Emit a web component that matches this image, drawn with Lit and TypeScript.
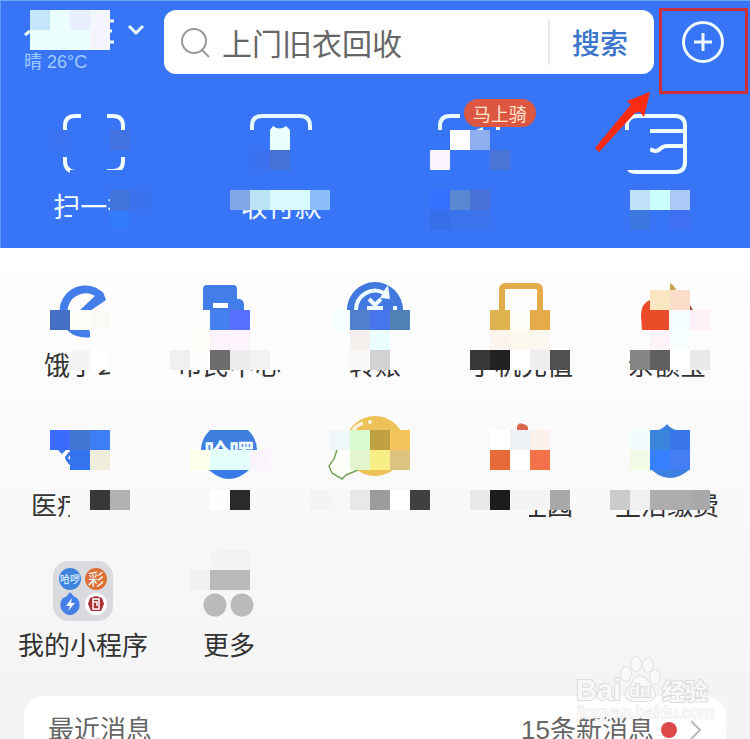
import { LitElement, css, html, svg, nothing } from "lit";
import { customElement, property } from "lit/decorators.js";

/** A horizontal run of 20px squares; an empty string leaves a gap. */
type Run = { x: number; y: number; colors: string[] };
/** A plain patch: x, y, width, height, colour. */
type Patch = [number, number, number, number, string];
type Tile = {
  name: string;
  icon: unknown;
  badge?: string;
  patches?: Patch[];
  runs?: Run[];
};

const BLUE = "#3875f6";
const R1 = "#fcfcfc";
const R2 = "#f9f9f9";

const quick: Tile[] = [
  {
    name: "扫一扫",
    icon: svg`<g fill="none" stroke="#f0fdff" stroke-width="4">
      <path d="M-29 16V12Q-29 2-19 2H-13M13 2H19Q29 2 29 12V16M-29 43V47Q-29 57-19 58M13 57H19Q29 57 29 47V43"/></g>`,
    patches: [
      [-24, 56, 60, 6, BLUE],
      [-24, 96, 40, 4, BLUE],
      [-22, 100, 40, 14, BLUE],
      [16, 76, 30, 40, BLUE],
    ],
    runs: [
      { x: -44, y: 16, colors: ["#3b72ef", "", "", "#4172df"] },
      { x: 16, y: 76, colors: ["#4272dc", "#3c71ee"] },
      { x: 16, y: 96, colors: ["#337af9"] },
    ],
  },
  {
    name: "收付款",
    icon: svg`<path d="M-29 16V12Q-29 2-19 2H19Q29 2 29 12V16" fill="none" stroke="#e8f8ff" stroke-width="4"/>
      <path d="M-11 16L-8 12Q-1 17 5 12L9 16Z" fill="#ecffff"/>`,
    runs: [
      { x: -12, y: 16, colors: ["#ecffff"] },
      { x: -32, y: 36, colors: ["#3b71ee", "#4472d6"] },
      { x: -52, y: 76, colors: ["#83a7e9", "#bbe3f6", "#d8faff", "#d8faff", "#8bbcfb"] },
    ],
  },
  {
    name: "",
    badge: "马上骑",
    icon: svg`<path d="M-29 16V12Q-29 2-19 2H-9" fill="none" stroke="#e8f8ff" stroke-width="4"/>
      <path d="M7 16L14 13V16ZM27 12h4v4h-4Z" fill="#ecffff"/>`,
    runs: [
      { x: -19, y: 16, colors: ["#ffffff", "#8eafef"] },
      { x: -39, y: 36, colors: ["#fbf4ff", "", "", "#4b75d2"] },
      { x: -39, y: 76, colors: ["#3670ff", "#5a88d2", "#4a72d8"] },
      { x: -39, y: 96, colors: ["#386fe8", "#3a73ec", "#3a73ec"] },
    ],
  },
  {
    name: "",
    icon: svg`<g fill="none" stroke="#f0fdff" stroke-width="4">
      <path d="M-29 16V12Q-29 2-19 2H19Q29 2 29 12V48Q29 58 19 58H-19Q-26 58-27 55M-6 17H29M29 32H11Q7 32 4 35Q0 39-6 35"/></g>`,
    patches: [[-33, 16, 26, 40, BLUE]],
    runs: [
      { x: -27, y: 76, colors: ["#bfdffb", "#c9ffff", "#abc8fb"] },
      { x: -27, y: 96, colors: ["#3d78e0", "", "#4070f2"] },
    ],
  },
];

const services: Tile[] = [
  {
    name: "饿了么",
    icon: svg`<path d="M17 14A22 22 0 1 0 7 52" fill="none" stroke="#437de9" stroke-width="8"/>
      <path d="M13 14L20 11L23 19L4 32L-5 31Z" fill="#437de9"/>`,
    patches: [
      [7, 49, 20, 12, R1],
      [27, 66, 16, 34, R1],
    ],
    runs: [
      { x: -33, y: 29, colors: ["#4470c4", "#fdfef8", "#fbfbf6"] },
      { x: -13, y: 69, colors: ["#f4f4f4", "#ffffff"] },
    ],
  },
  {
    name: "市民中心",
    icon: svg`<path d="M-26 29V8Q-26 4-22 4H4Q8 4 8 8V18H11Q15 19 15 24V29Z" fill="#437de9"/>
      <path d="M-16 22H-1V27H-16Z" fill="#fff"/>`,
    runs: [
      { x: -19, y: 29, colors: ["#4480f0", "#566ffc"] },
      { x: -39, y: 49, colors: ["#fffffa", "#fdf3fb", "#fdf3fb"] },
      { x: -59, y: 69, colors: ["#f0f0f0", "#fefefe", "#6d6d6d", "#ebebeb", "#f2f2f2", R1] },
    ],
  },
  {
    name: "转账",
    icon: svg`<path d="M-28 29A28 28 0 0 1 28 29Z" fill="#4179df"/>
      <path d="M-19 29A19 19 0 0 1 9 12" fill="none" stroke="#edfaff" stroke-width="4"/>
      <path d="M10 8L13 4L15 18L5 17ZM18 25h4v4h-4Z" fill="#edfaff"/>
      <path d="M-6 18L0 24L6 18M0 22V29M-8 27H8" fill="none" stroke="#edfaff" stroke-width="4"/>`,
    runs: [
      { x: -45, y: 29, colors: ["#f6ffff", "#527ece", "#4775ec", "#5080b4"] },
      { x: -25, y: 49, colors: ["#f5f0ee", "#ebffff"] },
      { x: -45, y: 69, colors: [R1, "#f9f9f9", "#d2d2d2", R1] },
    ],
  },
  {
    name: "手机充值",
    icon: svg`<path d="M-19 30V9Q-19 5-15 5H15Q19 5 19 9V30" fill="none" stroke="#e4ab49" stroke-width="6"/>`,
    runs: [
      { x: -31, y: 29, colors: ["#deb350", "#fffefb", "#e6ab48"] },
      { x: -31, y: 49, colors: ["#fdf4ee", "#fdf9ef", "#fdf8ef"] },
      { x: -51, y: 69, colors: ["#373737", "#222222", "#ffffff", "#eeeeee", "#505050", R1] },
    ],
  },
  {
    name: "余额宝",
    icon: svg`<path d="M-17 19Q-26 22-26 35L-25 49H2V29H-10Z" fill="#ea4b28"/>
      <path d="M3 2Q8 5 9 9H3Z" fill="#c9a650"/><path d="M23 24L26 29H23Z" fill="#a8473f"/>`,
    runs: [
      { x: -17, y: 9, colors: ["#fbe6c2", "#fcddca"] },
      { x: 3, y: 29, colors: ["#f5fdff", "#fef0f7"] },
      { x: -17, y: 49, colors: ["#fdf3f8", "#f7feff"] },
      { x: -37, y: 69, colors: ["#858585", "#606060", "#ffffff", "#e9e9e9"] },
    ],
  },
  {
    name: "医疗健康",
    icon: svg`<path d="M-25 29H-17L-21 33ZM-14 31Q-10 28-8 30L-10 36L-13 34L-15 37L-12 40V45Q-18 40-18 36Z" fill="#3474ee"/>`,
    patches: [[-13, 66, 68, 36, R2]],
    runs: [
      { x: -33, y: 9, colors: ["#3a6aff", "#4377d1", "#3f7df5"] },
      { x: -13, y: 29, colors: ["#3474ee", "#efeedd"] },
      { x: 7, y: 69, colors: ["#383838", "#b1b1b1"] },
    ],
  },
  {
    name: "",
    icon: svg`<path d="M-19 9H19Q28 18 28 29H-28Q-28 18-19 9Z" fill="#3f80de"/>
      <path d="M-20 49H20Q0 67-20 49Z" fill="#387be8"/>
      <text class="mini" x="0" y="41" font-size="25" font-weight="700">哈啰</text>`,
    runs: [
      { x: -39, y: 29, colors: ["#fdffea", "#e2fffc", "#e2fffc", "#fcf4fb"] },
      { x: -19, y: 69, colors: ["#fefefe", "#2a2a2a"] },
    ],
  },
  {
    name: "",
    icon: svg`<circle cx="0" cy="25" r="30" fill="#edc359"/>
      <path d="M-22 9Q-18 4-12 2" stroke="#fff3dc" stroke-width="3" fill="none"/><circle cx="-5" cy="1" r="2" fill="#fff3dc"/>
      <path d="M-38 29L-41 38L-46 45L-43 52L-33 58L-29 54L-17 49V29Z" fill="#fdfffb"/>
      <path d="M-38 29L-41 38L-46 45L-43 52L-33 58L-29 54L-17 49" fill="none" stroke="#77a35c" stroke-width="1.5"/>`,
    runs: [
      { x: -45, y: 9, colors: ["#eff7f8", "#d9fccf", "#bfa141", "#f3c55a"] },
      { x: -25, y: 29, colors: ["#e2f5cc", "#f7ee86", "#ddc280"] },
      { x: -65, y: 69, colors: ["#f4f4f4", "#f7f7f7", "#e8e8e8", "#9c9c9c", "#ffffff", "#404040"] },
    ],
  },
  {
    name: "蚂蚁庄园",
    icon: svg`<path d="M-4 9V5Q-2 1 2 3Q8 4 7 9Z" fill="#d9694a"/>`,
    patches: [
      [-53, 66, 61, 36, R2],
      [8, 66, 50, 6, R2],
    ],
    runs: [
      { x: -31, y: 9, colors: ["#ffffff", "#eef2f6", "#fdf1eb"] },
      { x: -31, y: 29, colors: ["#e76b3a", "#ffffff", "#f4724a"] },
      { x: -51, y: 69, colors: ["#e9e9e9", "#1c1c1c", "#f4f4f4", "#f4f4f4", "#a9a9a9", R2] },
    ],
  },
  {
    name: "生活缴费",
    icon: svg`<path d="M-9 9Q-3 7 0 3Q3 7 9 9ZM-19 45Q-18 49-16 49H22Q0 67-19 45Z" fill="#3c80e2"/>`,
    runs: [
      { x: -37, y: 9, colors: ["#f0fcff", "#3b84dc", "#3976ea"] },
      { x: -37, y: 29, colors: ["#f3fbe6", "#3680ff", "#457df4"] },
      { x: -57, y: 69, colors: ["#cbcbcb", "#f0f0f0", "#adadad", "#adadad", "#a9a9a9"] },
    ],
  },
  {
    name: "我的小程序",
    icon: svg`<rect x="-30" width="60" height="60" rx="15" fill="#d9dbde"/>
      <circle cx="-13" cy="18" r="11" fill="#3f84dc"/><circle cx="13" cy="18" r="11" fill="#df7035"/>
      <path d="M-13 31Q-9 36-6 37Q-2 42-4 48Q-8 54-13 54Q-18 54-22 48Q-24 42-20 37Q-16 36-13 31Z" fill="#4480e8"/>
      <path d="M-11 37L-17 45H-13L-15 50L-8 42H-12Z" fill="#fff"/>
      <circle cx="13" cy="43" r="11" fill="#fff"/><path d="M13 35L19 37L21 43L18 50H8L5 43L7 37Z" fill="#a93032"/>
      <path d="M10 38H16V48H10ZM10 41H14V45" fill="none" stroke="#fff" stroke-width="1.5"/>
      <text class="mini" x="-13" y="22" font-size="10">哈啰</text><text class="mini" x="13" y="24" font-size="16">彩</text>`,
  },
  {
    name: "更多",
    icon: svg`<circle cx="-14" cy="44" r="11.5" fill="#bababa"/><circle cx="13" cy="44" r="11.5" fill="#bababa"/>`,
    runs: [
      { x: -19, y: -11, colors: ["#f4f4f4", "#f2f2f2"] },
      { x: -39, y: 9, colors: ["#f1f1f1", "#bababa", "#bababa"] },
    ],
  },
];

@customElement("app-tile")
export class AppTile extends LitElement {
  @property({ attribute: false }) tile!: Tile;
  @property({ type: Boolean, reflect: true }) primary = false;

  static styles = css`
    :host {
      display: block;
    }
    button {
      position: relative;
      display: flex;
      flex-direction: column;
      align-items: center;
      gap: 5px;
      width: 100%;
      padding: 0;
      border: 0;
      background: none;
      color: #333;
      font: 26px/36px "Noto Sans CJK SC", sans-serif;
      white-space: nowrap;
    }
    .icon {
      width: 60px;
      height: 60px;
      overflow: visible;
    }
    .label {
      min-height: 36px;
    }
    .mini {
      fill: #f0fdff;
      text-anchor: middle;
    }
    .squares {
      position: absolute;
      inset: 0;
      width: 100%;
      height: 100%;
      overflow: visible;
      shape-rendering: crispEdges;
    }
    .badge {
      position: absolute;
      top: -15px;
      left: calc(50% - 5px);
      padding: 0 9px;
      border-radius: 14px;
      background: #dd5642;
      color: #ffe6cf;
      font-size: 18px;
      line-height: 28px;
    }
    :host([primary]) button {
      gap: 14px;
      color: #f0fdff;
      font-size: 27px;
    }
  `;

  render() {
    const { name, icon, badge, patches = [], runs = [] } = this.tile;
    const height = this.primary ? 110 : 101;
    return html`<button type="button">
      <svg class="icon" viewBox="-30 0 60 60" aria-hidden="true">${icon}</svg>
      <span class="label">${name}</span>
      <svg class="squares" viewBox="-70 0 140 ${height}" preserveAspectRatio="xMidYMin meet" aria-hidden="true">
        ${patches.map(([x, y, w, h, c]) => svg`<rect x=${x} y=${y} width=${w} height=${h} fill=${c} />`)}
        ${runs.map((run) =>
          run.colors.map((c, i) =>
            c ? svg`<rect x=${run.x + i * 20} y=${run.y} width="20" height="20" fill=${c} />` : nothing
          )
        )}
      </svg>
      ${badge ? html`<span class="badge">${badge}</span>` : nothing}
    </button>`;
  }
}

@customElement("app-root")
export class AppRoot extends LitElement {
  static styles = css`
    :host {
      position: relative;
      display: block;
      box-sizing: border-box;
      height: 100vh;
      overflow: hidden;
      background: linear-gradient(#fff 248px, #f3f3f4 100%);
      font-family: "Noto Sans CJK SC", sans-serif;
    }
    button {
      padding: 0;
      border: 0;
      background: none;
      font-family: inherit;
    }
    header {
      box-sizing: border-box;
      padding: 9px 0 24px;
      border-top: 1px solid #69a8fb;
      background: #3875f6;
      box-shadow: inset 1px 0 #5f9df5;
    }
    .top {
      display: flex;
      align-items: center;
      padding-right: 26px;
    }
    .place {
      flex: 0 0 164px;
      box-sizing: border-box;
      padding-left: 24px;
      text-align: left;
      color: #9fc9fa;
      font: 18px/24px "Liberation Sans", "Noto Sans CJK SC", sans-serif;
    }
    .city {
      display: block;
      width: 124px;
      height: 40px;
    }
    .search {
      display: flex;
      flex: 1;
      align-items: center;
      min-width: 0;
      height: 64px;
      border-radius: 12px;
      background: #fff;
    }
    .glass {
      flex: none;
      width: 32px;
      height: 32px;
      margin: 0 11px 0 15px;
    }
    input {
      flex: 1;
      min-width: 0;
      padding: 0;
      border: 0;
      outline: 0;
      background: none;
      font: 30px/44px "Noto Sans CJK SC", sans-serif;
    }
    input::placeholder {
      color: #666;
      opacity: 1;
    }
    .go {
      flex: 0 0 106px;
      height: 46px;
      padding-right: 4px;
      border-left: 2px solid #e6eaf2;
      color: #3a74cb;
      font-size: 28px;
      font-weight: 500;
      line-height: 44px;
    }
    .add {
      position: relative;
      flex: 0 0 42px;
      height: 42px;
      margin-left: 28px;
    }
    .add button,
    .add button svg {
      display: block;
      width: 42px;
      height: 42px;
    }
    .mark {
      position: absolute;
      inset: 0;
      z-index: 1;
      width: 42px;
      height: 42px;
      overflow: visible;
      pointer-events: none;
    }
    .quick {
      display: grid;
      grid-template-columns: repeat(4, 1fr);
      margin-top: 40px;
    }
    .services {
      display: grid;
      grid-template-columns: repeat(5, 1fr);
      row-gap: 39px;
      padding: 33px 10px 34px;
    }
    .news {
      display: flex;
      align-items: center;
      margin: 0 24px;
      padding: 16px 18px 16px 24px;
      border-radius: 20px;
      background: #fff;
      color: #666;
      font: 26px/36px "Liberation Sans", "Noto Sans CJK SC", sans-serif;
    }
    h2 {
      flex: 1;
      margin: 0;
      font: inherit;
    }
    .more {
      display: flex;
      align-items: center;
      gap: 7px;
      color: inherit;
      text-decoration: none;
    }
    .dot {
      width: 16px;
      height: 16px;
      border-radius: 50%;
      background: #dd4a4a;
    }
    .arrow {
      width: 24px;
      height: 24px;
    }
    .watermark {
      position: absolute;
      right: 36px;
      bottom: 14px;
      width: 140px;
      height: 70px;
      pointer-events: none;
      font-family: "Liberation Sans", "Noto Sans CJK SC", sans-serif;
      font-weight: 700;
      fill: #f8f8f8;
      stroke: #dcdcdc;
      paint-order: stroke;
    }
    .site {
      font-weight: 400;
      fill: #fff;
    }
  `;

  render() {
    return html`
      <header>
        <div class="top">
          <button class="place" type="button">
            <svg class="city" viewBox="24 10 124 40" aria-hidden="true">
              <path d="M25 35L30 31M110 21H114M110 31H112M110 42H114" stroke="#ecffff" stroke-width="3" />
              <path d="M30 10H110V50H30Z" fill="#ecffff" />
              <path d="M30 10H50V30H30Z" fill="#c3e6fa" />
              <path d="M70 10H90V30H70Z" fill="#e7effe" />
              <path d="M90 10H110V50H90Z" fill="#f5f6fd" />
              <path d="M129 26L136 33L143 26" fill="none" stroke="#ecffff" stroke-width="3" />
            </svg>
            晴 26°C
          </button>
          <form class="search" @submit=${(e: Event) => e.preventDefault()}>
            <svg class="glass" viewBox="0 0 32 32" fill="none" stroke="#999" stroke-width="2" aria-hidden="true">
              <circle cx="15" cy="15" r="12" />
              <path d="M23 24L30 31" />
            </svg>
            <input type="search" aria-label="搜索" placeholder="上门旧衣回收" />
            <button class="go">搜索</button>
          </form>
          <div class="add">
            <button type="button" aria-label="+">
              <svg viewBox="0 0 42 42" fill="none" stroke="#edfaff" stroke-width="3">
                <circle cx="21" cy="21" r="19.5" />
                <path d="M21 12V30M12 21H30" />
              </svg>
            </button>
            <svg class="mark" viewBox="0 0 42 42" aria-hidden="true">
              <rect x="-21.5" y="-11.5" width="86" height="83" fill="none" stroke="#cf3038" stroke-width="3" />
              <path d="M-32 71L-55 80L-51 84L-54 87L-87 127L-83 131L-47 92L-42 91L-38 96Z" fill="#fb2a12" />
            </svg>
          </div>
        </div>
        <nav class="quick">${quick.map((t) => html`<app-tile primary .tile=${t}></app-tile>`)}</nav>
      </header>
      <main>
        <div class="services">${services.map((t) => html`<app-tile .tile=${t}></app-tile>`)}</div>
        <section class="news">
          <h2>最近消息</h2>
          <a class="more" href="#">
            15条新消息
            <span class="dot"></span>
            <svg class="arrow" viewBox="0 0 24 24" fill="none" stroke="#bbb" stroke-width="2">
              <path d="M7 3L16 12L7 21" />
            </svg>
          </a>
        </section>
      </main>
      <svg class="watermark" viewBox="0 0 140 70">
        <text x="2" y="45" font-size="29" stroke-width="2">Bai</text>
        <g stroke-width="1.5">
          <ellipse cx="52" cy="19" rx="5" ry="7" />
          <ellipse cx="62" cy="9" rx="5" ry="7" />
          <ellipse cx="74" cy="10" rx="5" ry="7" />
          <ellipse cx="81" cy="22" rx="5" ry="7" />
          <path d="M66 21Q72 21 77 31Q84 38 80 43Q77 47 66 46Q55 47 52 42Q49 36 57 30Q61 21 66 21Z" />
        </g>
        <text x="55" y="42" font-size="18" stroke-width="2">du</text>
        <text x="88" y="45" font-size="23" stroke-width="2">经验</text>
        <text class="site" x="3" y="63" font-size="17" stroke-width="1">jingyan.baidu.com</text>
      </svg>
    `;
  }
}
